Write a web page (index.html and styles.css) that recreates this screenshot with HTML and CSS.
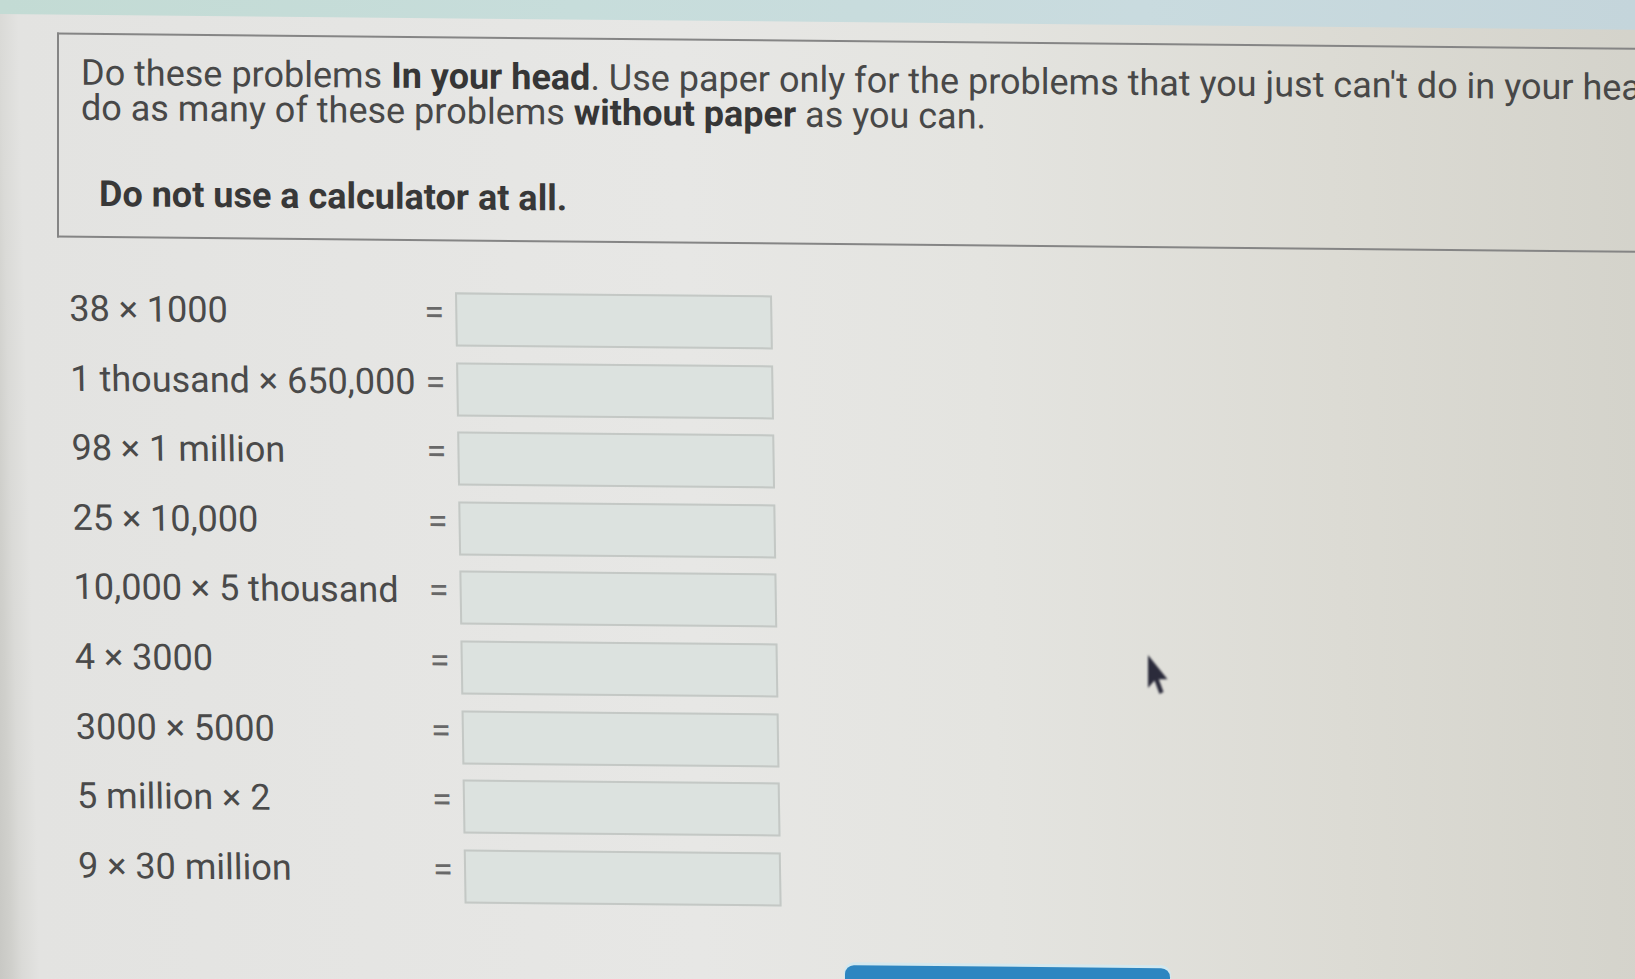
FILE: index.html
```html
<!DOCTYPE html>
<html lang="en">
<head>
<meta charset="utf-8">
<title>Mental math</title>
<link rel="stylesheet" href="styles.css">
</head>
<body>
<div class="screen">
  <div class="topband"></div>
  <div class="notice">
    <p class="intro">Do these problems <b>In your head</b>. Use paper only for the problems that you just can't do in your head. Try to<br>do as many of these problems <b>without paper</b> as you can.</p>
    <p class="warning">Do not use a calculator at all.</p>
  </div>
  <div class="problems">
    <div class="row"><span class="label">38 × 1000</span><span class="eq">=</span><input class="answer" type="text" aria-label="38 × 1000"></div>
    <div class="row"><span class="label">1 thousand × 650,000</span><span class="eq">=</span><input class="answer" type="text" aria-label="1 thousand × 650,000"></div>
    <div class="row"><span class="label">98 × 1 million</span><span class="eq">=</span><input class="answer" type="text" aria-label="98 × 1 million"></div>
    <div class="row"><span class="label">25 × 10,000</span><span class="eq">=</span><input class="answer" type="text" aria-label="25 × 10,000"></div>
    <div class="row"><span class="label">10,000 × 5 thousand</span><span class="eq">=</span><input class="answer" type="text" aria-label="10,000 × 5 thousand"></div>
    <div class="row"><span class="label">4 × 3000</span><span class="eq">=</span><input class="answer" type="text" aria-label="4 × 3000"></div>
    <div class="row"><span class="label">3000 × 5000</span><span class="eq">=</span><input class="answer" type="text" aria-label="3000 × 5000"></div>
    <div class="row"><span class="label">5 million × 2</span><span class="eq">=</span><input class="answer" type="text" aria-label="5 million × 2"></div>
    <div class="row"><span class="label">9 × 30 million</span><span class="eq">=</span><input class="answer" type="text" aria-label="9 × 30 million"></div>
  </div>
  <div class="footer"><button class="go" type="button" aria-label="Check answers"></button></div>
</div>
<svg class="cursor" viewBox="0 0 24 44" width="24" height="44" aria-hidden="true">
  <path d="M2 1 L2 34 L8.5 26.5 L13.5 40 L17.5 38 L12.8 25.2 L21.5 25.2 Z" fill="#2b2b3b"/>
</svg>
</body>
</html>
```
FILE: styles.css
```css
html, body {
  margin: 0;
  height: 100%;
  overflow: hidden;
}

body {
  font-family: Roboto, "Liberation Sans", Arial, sans-serif;
  background: linear-gradient(88.7deg,
    #c8c8c4 0px,
    #d0d0cc 12px,
    #dadad7 22px,
    #e3e3e1 40px,
    #e7e7e5 700px,
    #e4e4e0 1000px,
    #dcdbd4 1350px,
    #d4d3cb 1650px);
  position: relative;
}

.screen {
  transform: skewY(0.55deg);
  transform-origin: 0 0;
  margin-top: -20px;
}

.topband {
  height: 34px;
  background: linear-gradient(to right, #c3dbd4 0%, #c7dddb 35%, #c9dbdf 70%, #c4d5db 100%);
}

.notice {
  margin: 18px 0 0 57px;
  width: 1760px;
  border: 2px solid #858585;
  border-right: none;
  padding: 21px 0 24px 22px;
  color: #484848;
}

.intro {
  margin: 0;
  font-size: 36px;
  line-height: 35px;
  white-space: nowrap;
}

.intro b {
  font-weight: 700;
  color: #363636;
}

.warning {
  margin: 51px 0 0;
  padding-left: 18px;
  font-size: 36px;
  line-height: 35px;
  font-weight: 700;
  color: #383838;
  white-space: nowrap;
}

.problems {
  margin-top: 51px;
  padding-left: 69px;
  display: flex;
  flex-direction: column;
  gap: 15.6px;
  transform: skewX(0.9deg);
  transform-origin: 0 0;
}

.row {
  display: flex;
  align-items: flex-start;
}

.label {
  width: 355px;
  padding-top: 3px;
  font-size: 36px;
  line-height: 35px;
  color: #4a4a4a;
  white-space: nowrap;
}

.eq {
  width: 20px;
  padding-top: 3px;
  text-align: center;
  font-size: 36px;
  line-height: 35px;
  color: #686868;
}

.answer {
  margin: 0 0 0 11px;
  width: 317px;
  height: 54px;
  box-sizing: border-box;
  padding: 0 8px;
  border: 2px solid #c4c8c5;
  border-radius: 0;
  background: #dce2df;
  font-family: inherit;
  font-size: 30px;
  outline: none;
}

.footer {
  margin-top: 58px;
  padding-left: 845px;
}

.go {
  display: block;
  width: 325px;
  height: 44px;
  border: none;
  padding: 0;
  background: #2e86c1;
  border-radius: 9px 9px 0 0;
  box-shadow: 0 -2px 0 1px #d3e8ef;
}

.cursor {
  position: absolute;
  left: 1146px;
  top: 654px;
  filter: blur(0.9px);
}
```
